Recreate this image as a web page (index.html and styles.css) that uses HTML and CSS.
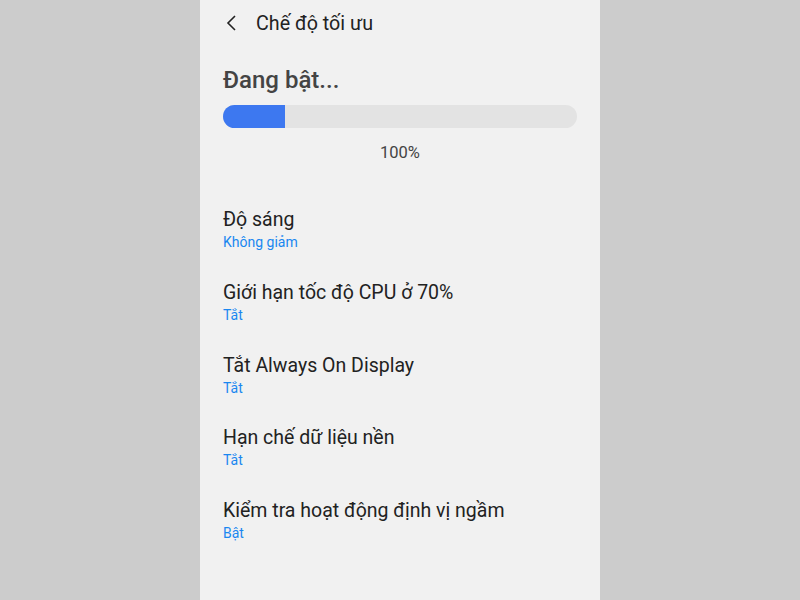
FILE: index.html
```html
<!DOCTYPE html>
<html lang="vi">
<head>
  <meta charset="UTF-8" />
  <title>Chế độ tối ưu</title>
  <link rel="stylesheet" href="styles.css">
</head>
<body>
  <div class="phone">
    <header class="top-bar">
      <svg class="back" width="14" height="16" viewBox="0 0 14 16">
        <path d="M10 1 L3 8 L10 15" fill="none" stroke="#222" stroke-width="1.6"/>
      </svg>
      <span class="title">Chế độ tối ưu</span>
    </header>

    <h1 class="status">Đang bật...</h1>
    <div class="progress">
      <div class="progress-fill" style="width:62px"></div>
    </div>
    <div class="percent">100%</div>

    <ul class="settings">
      <li><div class="name">Độ sáng</div><div class="value">Không giảm</div></li>
      <li><div class="name">Giới hạn tốc độ CPU ở 70%</div><div class="value">Tắt</div></li>
      <li><div class="name">Tắt Always On Display</div><div class="value">Tắt</div></li>
      <li><div class="name">Hạn chế dữ liệu nền</div><div class="value">Tắt</div></li>
      <li><div class="name">Kiểm tra hoạt động định vị ngầm</div><div class="value">Bật</div></li>
    </ul>
  </div>
</body>
</html>
```

FILE: styles.css
```css
html, body {
  margin: 0;
  height: 100%;
}

body {
  background: #cccccc;
  font-family: Roboto, "Noto Sans", sans-serif;
  display: flex;
  justify-content: center;
}

.phone {
  width: 400px;
  height: 600px;
  background: #f1f1f1;
  box-sizing: border-box;
  padding: 0 23px;
}

.top-bar {
  display: flex;
  align-items: center;
  height: 46px;
  gap: 17px;
  padding-left: 2px;
}

.title {
  font-size: 19.7px;
  color: #222;
}

.status {
  margin: 16px 0 0;
  font-size: 24px;
  font-weight: 500;
  color: #444;
  line-height: 36px;
}

.progress {
  margin-top: 7px;
  height: 23px;
  border-radius: 12px;
  background: #e3e3e3;
  overflow: hidden;
}

.progress-fill {
  height: 100%;
  background: #3d78f0;
}

.percent {
  text-align: center;
  font-size: 16.5px;
  color: #444;
  margin-top: 15px;
}

.settings {
  list-style: none;
  margin: 46px 0 0;
  padding: 0;
}

.settings li {
  height: 72.75px;
}

.name {
  font-size: 19.5px;
  color: #222;
  line-height: 24px;
}

.value {
  font-size: 14px;
  color: #1a87f0;
  line-height: 18px;
  margin-top: 1px;
}
```
